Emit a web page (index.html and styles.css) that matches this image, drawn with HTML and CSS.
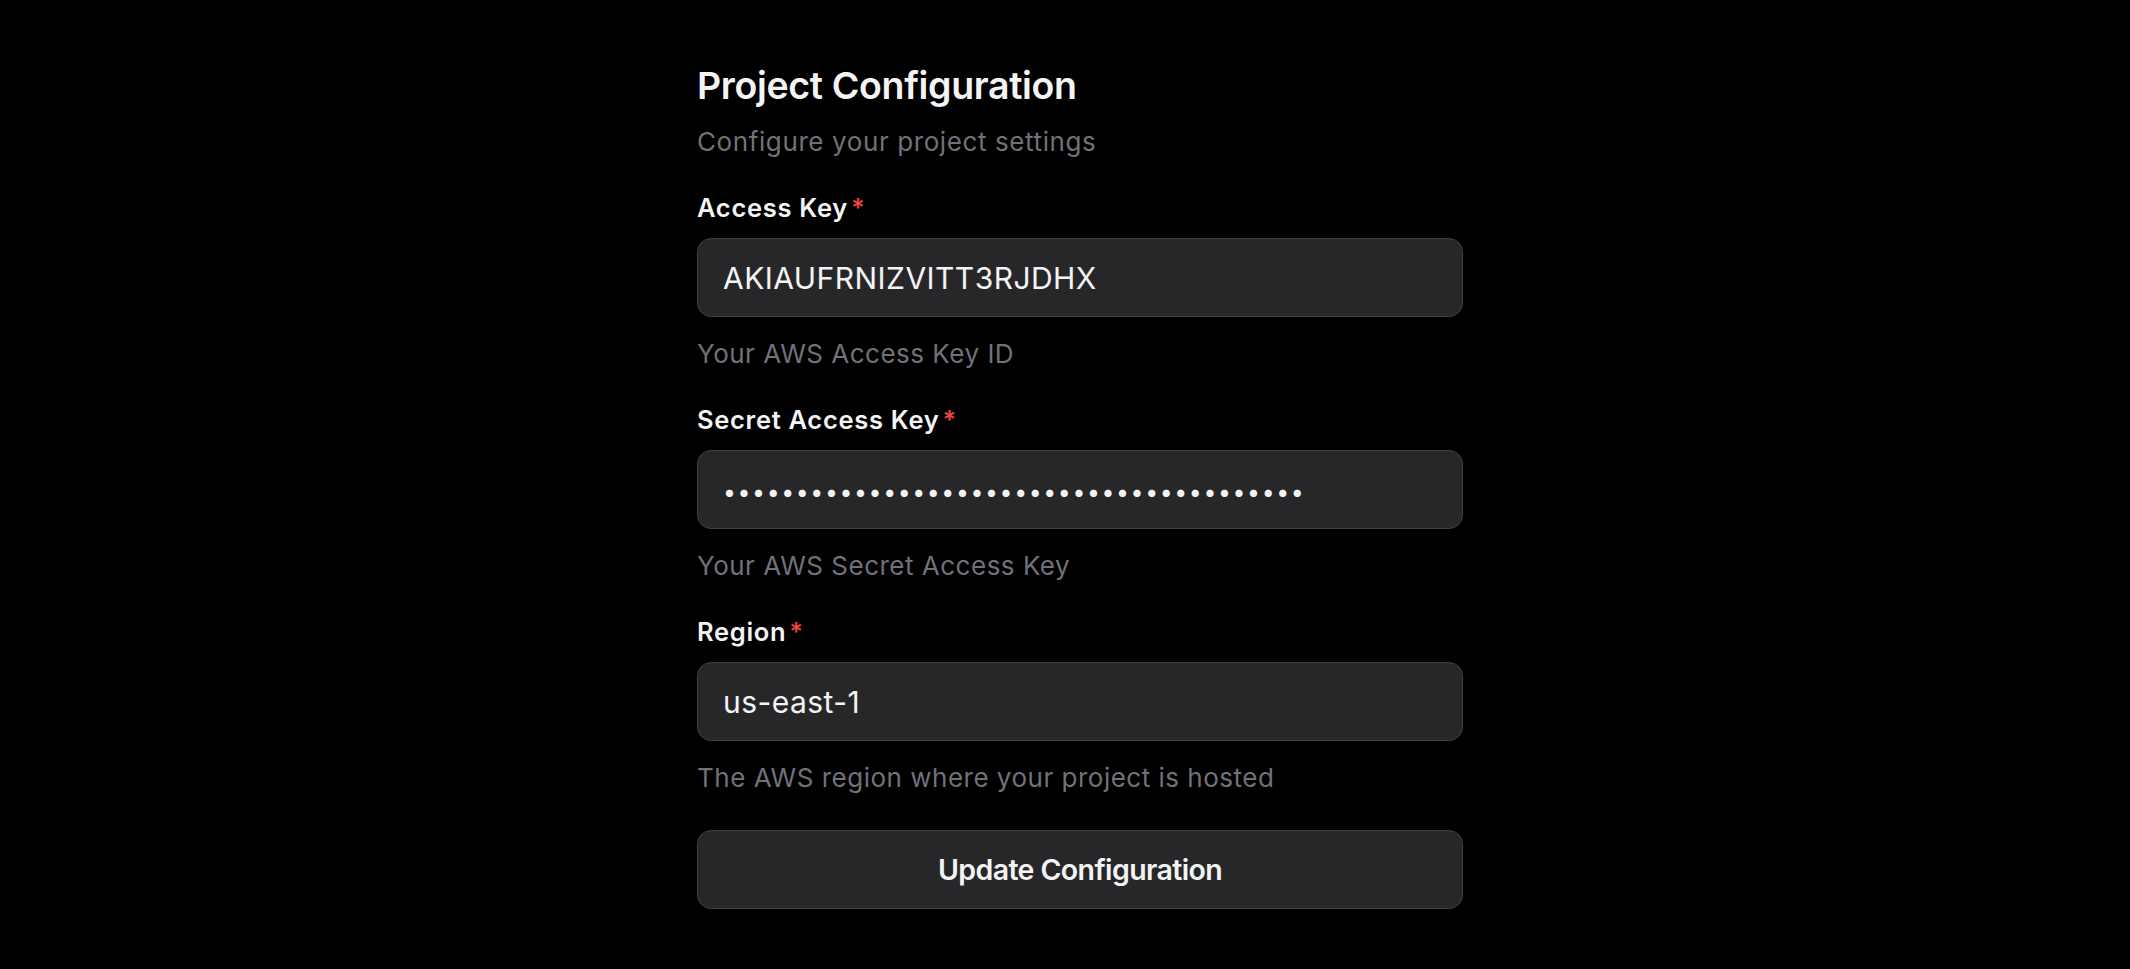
FILE: index.html
```html
<!DOCTYPE html>
<html lang="en">
<head>
<meta charset="utf-8">
<title>Project Configuration</title>
<link rel="stylesheet" href="styles.css">
</head>
<body>
<main class="page">
  <form class="config-form" onsubmit="return false;">
    <header class="form-header">
      <h1 class="form-title">Project Configuration</h1>
      <p class="form-subtitle">Configure your project settings</p>
    </header>

    <div class="field">
      <label class="field-label" for="access-key">Access Key<span class="required">*</span></label>
      <input class="field-input" id="access-key" type="text" value="AKIAUFRNIZVITT3RJDHX">
      <p class="field-help">Your AWS Access Key ID</p>
    </div>

    <div class="field">
      <label class="field-label" for="secret-key">Secret Access Key<span class="required">*</span></label>
      <input class="field-input field-input--secret" id="secret-key" type="password" value="0123456789012345678901234567890123456789">
      <p class="field-help">Your AWS Secret Access Key</p>
    </div>

    <div class="field">
      <label class="field-label" for="region">Region<span class="required">*</span></label>
      <input class="field-input" id="region" type="text" value="us-east-1">
      <p class="field-help">The AWS region where your project is hosted</p>
    </div>

    <button class="submit-button" type="submit">Update Configuration</button>
  </form>
</main>
</body>
</html>
```

FILE: styles.css
```css
* {
  box-sizing: border-box;
}

html, body {
  margin: 0;
  padding: 0;
  background: #000000;
}

body {
  font-family: "Inter", "Noto Sans", "Liberation Sans", sans-serif;
  color: #f4f4f5;
}

.page {
  display: flex;
  justify-content: center;
  padding: 63px 0 40px 30px;
}

.config-form {
  width: 766px;
  display: flex;
  flex-direction: column;
  gap: 35.5px;
}

.form-header {
  display: flex;
  flex-direction: column;
  gap: 17px;
}

.form-title {
  margin: 0;
  font-size: 37.5px;
  line-height: 46px;
  font-weight: 600;
  letter-spacing: -0.35px;
  color: #f4f4f5;
}

.form-subtitle {
  margin: 0;
  font-size: 26px;
  line-height: 32px;
  font-weight: 400;
  letter-spacing: 0.6px;
  color: #71717a;
}

.field {
  display: flex;
  flex-direction: column;
}

.field-label {
  font-size: 25.5px;
  line-height: 28px;
  font-weight: 600;
  letter-spacing: 0.7px;
  color: #f4f4f5;
  margin-bottom: 16.5px;
}

.required {
  color: #ef4444;
  margin-left: 3px;
}

.field-input {
  width: 100%;
  height: 79px;
  padding: 0 25px;
  border: 1.5px solid #3f3f46;
  border-radius: 14px;
  background: #27272a;
  color: #f4f4f5;
  font-family: inherit;
  font-size: 30px;
  letter-spacing: 0.45px;
  outline: none;
}

.field-input--secret {
  font-size: 23px;
  letter-spacing: 1.62px;
  padding-top: 4px;
  padding-left: 25px;
}

.field-help {
  margin: 21px 0 0;
  font-size: 26px;
  line-height: 32px;
  letter-spacing: 0.5px;
  color: #71717a;
}

.submit-button {
  width: 100%;
  height: 79px;
  border: 1.5px solid #3f3f46;
  border-radius: 14px;
  background: #27272a;
  color: #f4f4f5;
  font-family: inherit;
  font-size: 28.5px;
  font-weight: 600;
  letter-spacing: -0.6px;
  cursor: pointer;
}
```
